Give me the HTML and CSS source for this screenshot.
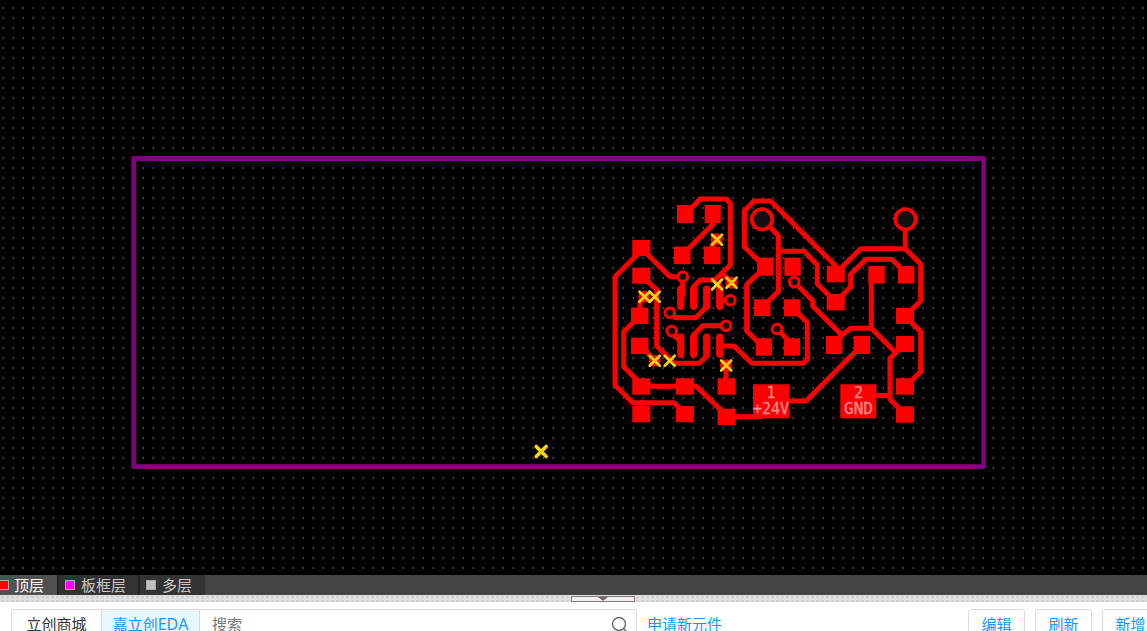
FILE: index.html
```
<!DOCTYPE html>
<html lang="zh-CN">
<head>
<meta charset="utf-8">
<title>PCB</title>
<link rel="stylesheet" href="styles.css">
</head>
<body>
<main class="app">
<svg class="board" viewBox="0 0 1147 575" width="1147" height="575">
  <defs>
    <pattern id="grid" width="10" height="10" patternUnits="userSpaceOnUse">
      <rect x="2" y="7" width="1" height="2" fill="#222"/>
      <rect x="3" y="7" width="1" height="2" fill="#4c4c4c"/>
    </pattern>
    <path id="x" d="M-5-5L5 5M5-5L-5 5"/>
  </defs>
  <rect width="1147" height="575" fill="#000"/>
  <rect width="1147" height="575" fill="url(#grid)"/>
  <rect class="outline" x="133.7" y="158.5" width="850" height="308.2"/>
  <g class="traces">
    <path d="M686 214L700 199H726L730.3 203.3V265L715 280H700L693.7 286.5V290M712.7 214V224.5L683 254M716.7 239.3L712 246V255M722 273L731.3 282.7"/>
    <path d="M641.7 250L615 276.7V385L632.7 402.7H674L684 413M641.7 402V412M643 250L670 276.7H678M682.7 282V295L680.7 300M719.7 285V300.3H725"/>
    <path d="M673 315L675.5 317.7H695.7L706.7 306.7V300M642 276L656.7 290V346L674 363.3H699.3L706.7 356V350M644.3 296.7L640 302V312"/>
    <path d="M639.7 316L623.7 331.7V366.7L640 383M641 346L654.7 360.7M675 336L680.7 342M721 325.7H702.7L693.7 335V340"/>
    <path d="M719.7 346H734L752 363.3H803.3L807.3 359.3V322.7L794 309M726 365.3V386M641 386.2H696L726 415M726 416.7H760"/>
    <path d="M765 267L744.3 246.7V211L754 201H770.7L836 266.3M765 267L746.7 284.5V331L762 346M770 227L778.3 235.7V291.7L762 307.5M778.3 251.3H804L817.3 265V284L835.7 302L850.7 286.7V274.3L866 259.3H891.7L905 272.5"/>
    <path d="M905.3 230V248.7M836 273L860.7 248.7H905.3L920.7 264.3V301L905 316L920.7 331.7V371.7L905 387M871.3 278V328.3"/>
    <path d="M797.5 285.5L812.7 300.7V306L841.7 335L850.7 328.3H871.3L895.7 352.7L890 358.3V399.3L905 414M834 343L841.7 335M905 343.5L895.7 352.7M876 395.5H890M780.5 332.5L792 344M862 345L806 401H788"/>
  </g>
  <g class="copper">
    <rect x="677" y="205" width="16" height="18"/><rect x="704.7" y="205" width="16" height="18"/>
    <rect x="674" y="246.5" width="16.5" height="17.7"/><rect x="704" y="246.5" width="16.5" height="17.7"/>
    <rect x="632.3" y="240" width="18" height="16"/><rect x="632.3" y="267.7" width="18" height="16"/>
    <rect x="631" y="307.7" width="17.3" height="16.3"/><rect x="631" y="337.7" width="17.3" height="16.3"/>
    <rect x="632.3" y="378.3" width="18" height="16.4"/><rect x="676" y="378.3" width="18" height="16.4"/>
    <rect x="632.3" y="406" width="18" height="16.3"/><rect x="676" y="406" width="18" height="16.3"/>
    <rect x="717.5" y="378.3" width="18" height="16.4"/><rect x="717.5" y="408.7" width="18" height="16.3"/>
    <rect x="753" y="384.3" width="36.3" height="34"/><rect x="840.3" y="384.3" width="36" height="34"/>
    <rect x="757" y="257.7" width="16.3" height="18"/><rect x="784.3" y="257.7" width="16.4" height="18"/>
    <rect x="754" y="299.3" width="16.4" height="17"/><rect x="784" y="299.3" width="16.4" height="17"/>
    <rect x="755.7" y="338.3" width="16.3" height="17.4"/><rect x="783.7" y="338.3" width="16.3" height="17.4"/>
    <rect x="826.7" y="266" width="18" height="16.3"/><rect x="826.7" y="294" width="18" height="16.3"/>
    <rect x="868.3" y="266" width="16.4" height="17.5"/><rect x="898" y="266" width="16.4" height="17.5"/>
    <rect x="896" y="308" width="18" height="16"/><rect x="896" y="336" width="18" height="16"/>
    <rect x="826" y="336" width="16.3" height="18"/><rect x="853.7" y="336" width="16.3" height="18"/>
    <rect x="896" y="378.3" width="18" height="16.4"/><rect x="896" y="406.3" width="18" height="16.4"/>
    <circle cx="716.7" cy="239.3" r="6"/><circle cx="731.3" cy="282.7" r="6"/><circle cx="644.3" cy="296.7" r="6"/>
    <circle cx="654.7" cy="360.7" r="6"/><circle cx="726" cy="365.3" r="6"/>
  </g>
  <path class="pins" d="M680.7 289V306.3M693.7 289V306.3M706.7 289V306.3M719.7 289V306.3M680.7 337V354.3M693.7 337V354.3M706.7 337V354.3M719.7 337V354.3"/>
  <g class="vias">
    <circle cx="682.7" cy="276.7" r="4.8"/><circle cx="669.7" cy="312.7" r="4.8"/><circle cx="671.7" cy="331" r="4.8"/>
    <circle cx="726" cy="325.7" r="4.8"/><circle cx="730.3" cy="300.3" r="4.8"/><circle cx="794.2" cy="282" r="4.8"/><circle cx="777" cy="329" r="4.8"/>
    <circle class="hole" cx="762" cy="219.3" r="10.2"/><circle class="hole" cx="905.5" cy="219.3" r="10.2"/>
  </g>
  <g class="marks">
    <use href="#x" x="717" y="239.7"/><use href="#x" x="717" y="284.5"/><use href="#x" x="731.5" y="282.7"/>
    <use href="#x" x="644.5" y="296.7"/><use href="#x" x="654.7" y="296.7"/><use href="#x" x="654.7" y="360.7"/>
    <use href="#x" x="669.7" y="360.7"/><use href="#x" x="726.2" y="365.5"/>
    <use class="origin" href="#x" x="541.2" y="451.5"/>
  </g>
  <g class="labels">
    <text x="771" y="397.7">1</text><text x="771" y="413.7">+24V</text>
    <text x="858.5" y="397.7">2</text><text x="858.5" y="413.7" textLength="29" lengthAdjust="spacingAndGlyphs">GND</text>
  </g>
</svg>
<nav class="layers">
  <div class="layer top"><i class="swatch red"></i>顶层</div>
  <div class="layer frame"><i class="swatch magenta"></i>板框层</div>
  <div class="layer multi"><i class="swatch gray"></i>多层</div>
</nav>
<div class="splitter"><div class="handle"><i class="arrow"></i></div></div>
<section class="panel">
  <div class="search">
    <span class="source shop">立创商城</span>
    <span class="source eda">嘉立创<span class="latin">EDA</span></span>
    <span class="query">搜索</span>
    <svg class="glass" width="18" height="18" viewBox="0 0 18 18"><circle cx="8" cy="8" r="6.5"/><path d="M12.6 12.6L16 16"/></svg>
  </div>
  <a class="request">申请新元件</a>
  <div class="actions"><span class="button">编辑</span><span class="button">刷新</span><span class="button">新增</span></div>
</section>
</main>
</body>
</html>
```
FILE: styles.css
```
body { margin: 0; overflow: hidden; font: 15px/20px "Noto Sans CJK SC", sans-serif; }
.app { width: 1147px; height: 631px; display: flex; flex-direction: column; overflow: hidden; background: #fff; }
.board { display: block; flex: none; }
.outline { fill: none; stroke: #800080; stroke-width: 4.8; stroke-linejoin: round; }
.traces { fill: none; stroke: #f00; stroke-width: 5.1; stroke-linecap: round; stroke-linejoin: round; }
.copper { fill: #f00; }
.pins { fill: none; stroke: #f00; stroke-width: 7.2; stroke-linecap: round; }
.vias { fill: #111; stroke: #f00; stroke-width: 3; }
.hole { stroke-width: 3.8; }
.marks { fill: none; stroke: #ffd20a; stroke-width: 2.7; stroke-linecap: round; }
.origin { stroke-width: 3.6; }
.labels { fill: #ff8c8c; stroke: #ff8c8c; stroke-width: .35; font: 15px "DejaVu Sans Mono", monospace; text-anchor: middle; }
.layers { display: flex; flex: none; height: 20px; background: #444; color: #c8c8c8; }
.layer { display: flex; align-items: center; box-sizing: border-box; height: 20px; background: #333; border-right: 2px solid #222; white-space: nowrap; line-height: 20px; }
.top { width: 59px; background: #505050; color: #fff; }
.frame { width: 81px; padding-left: 6px; }
.multi { width: 65px; padding-left: 6px; border: 0; }
.swatch { box-sizing: border-box; width: 10px; height: 10px; margin-right: 6px; border: 1px solid #aaa; }
.top .swatch { margin-left: -1px; margin-right: 5px; }
.red { background: #f00; }
.magenta { background: #f0f; }
.gray { background: #c0c0c0; }
.splitter { flex: none; height: 7px; display: flex; background: #e0e0e0 radial-gradient(circle, #c9c9c9 1px, transparent 1.3px) 0 0 / 5px 4px; }
.handle { box-sizing: border-box; width: 64px; height: 6px; margin: 1px 0 0 571px; border: 1px solid #857878; background: #f0eeee; display: flex; justify-content: center; }
.arrow { width: 0; height: 0; border: 5px solid transparent; border-top: 4px solid #756868; border-bottom: 0; }
.panel { display: flex; flex: none; height: 29px; padding: 7px 0 0 11px; box-sizing: border-box; }
.search { display: flex; flex: none; box-sizing: border-box; width: 626px; height: 32px; border: 1px solid #d9d9d9; border-radius: 3px; line-height: 27px; }
.source { box-sizing: border-box; border-right: 1px solid #d9d9d9; text-align: center; white-space: nowrap; }
.shop { width: 90px; color: #333; }
.eda { width: 98px; background: #e6f7ff; color: #1890ff; }
.latin { font-family: "Open Sans", sans-serif; font-size: 16px; line-height: 1; }
.query { flex: 1; padding-left: 12px; color: #757575; }
.glass { margin: 6px 7px 0 0; fill: none; stroke: #666; stroke-width: 1.4; }
.request { width: 75px; margin-left: 10px; color: #1890ff; line-height: 29px; white-space: nowrap; }
.actions { display: flex; gap: 10px; margin-left: 246px; }
.button { flex: none; box-sizing: border-box; width: 57px; height: 32px; border: 1px solid #d9d9d9; border-radius: 3px; color: #1890ff; line-height: 27px; text-align: center; }
```
